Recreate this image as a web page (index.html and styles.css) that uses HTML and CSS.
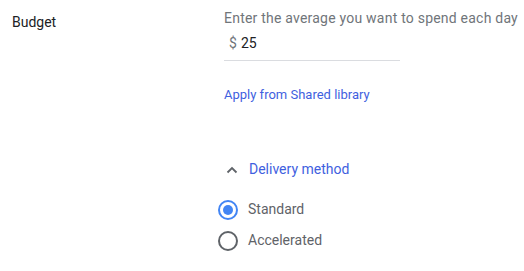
FILE: index.html
```html
<!DOCTYPE html>
<html>
<head>
<meta charset="utf-8">
<link rel="stylesheet" href="styles.css">
</head>
<body>
<div class="row">
  <div class="label">Budget</div>
  <div class="content">
    <div class="hint">Enter the average you want to spend each day</div>
    <div class="field"><span class="cur">$</span><span class="val">25</span></div>
    <a class="link" href="#">Apply from Shared library</a>
    <div class="section">
      <svg class="chev" width="12" height="8" viewBox="0 0 12 8"><path d="M1.5 6.5 L6 2 L10.5 6.5" fill="none" stroke="#5f6368" stroke-width="1.8"/></svg>
      <span class="section-title">Delivery method</span>
    </div>
    <div class="radios">
      <div class="radio-row"><span class="radio checked"></span><span class="rlabel">Standard</span></div>
      <div class="radio-row"><span class="radio"></span><span class="rlabel">Accelerated</span></div>
    </div>
  </div>
</div>
</body>
</html>
```
FILE: styles.css
```css
html, body {
  margin: 0;
  padding: 0;
  background: #fff;
}
body {
  font-family: Roboto, "Liberation Sans", Arial, sans-serif;
  font-size: 14px;
  line-height: 20px;
  color: #202124;
}
.row {
  display: flex;
  padding: 8px 0 0 12px;
}
.label {
  width: 212px;
  padding-top: 4px;
  color: #202124;
}
.content {
  display: flex;
  flex-direction: column;
  align-items: flex-start;
}
.hint {
  color: #70757a;
  letter-spacing: 0.22px;
}
.field {
  margin-top: 5px;
  width: 171px;
  padding: 0 0 7px 5px;
  border-bottom: 1px solid #dadce0;
}
.cur {
  color: #70757a;
  margin-right: 4px;
}
.val {
  color: #202124;
}
.link {
  margin-top: 24px;
  font-size: 13px;
  color: #3f5fe0;
  text-decoration: none;
}
.section {
  margin-top: 54px;
  display: flex;
  align-items: center;
}
.chev {
  margin-left: 2px;
  margin-right: 11px;
  margin-top: 1px;
}
.section-title {
  color: #3f5fe0;
}
.radios {
  margin-top: 21px;
  margin-left: -6px;
  display: flex;
  flex-direction: column;
  gap: 11px;
}
.radio-row {
  display: flex;
  align-items: center;
  height: 20px;
}
.radio {
  box-sizing: border-box;
  width: 20px;
  height: 20px;
  border-radius: 50%;
  border: 2px solid #5f6368;
  margin-right: 10px;
  display: flex;
  align-items: center;
  justify-content: center;
}
.radio.checked {
  border-color: #4285f4;
}
.radio.checked::after {
  content: "";
  width: 10px;
  height: 10px;
  border-radius: 50%;
  background: #4285f4;
}
.rlabel {
  color: #5f6368;
  margin-top: -2px;
}
```
